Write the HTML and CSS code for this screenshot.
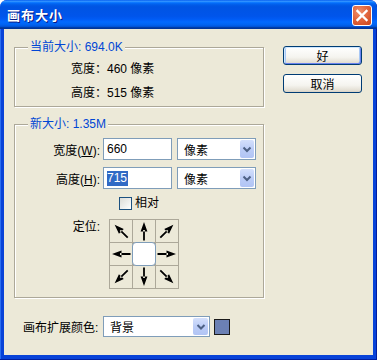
FILE: index.html
```html
<!DOCTYPE html>
<html>
<head>
<meta charset="utf-8">
<link rel="stylesheet" href="styles.css">
</head>
<body>
<div class="window">
  <div class="titlebar">
    <span class="title">画布大小</span>
    <span class="close"><svg width="18" height="19" viewBox="0 0 18 19"><path d="M4.5 5 L13.5 14 M13.5 5 L4.5 14" stroke="#fff" stroke-width="2.4" stroke-linecap="square"/></svg></span>
  </div>
  <div class="client">
    <div class="main">
      <fieldset class="group g1">
        <legend>当前大小: 694.0K</legend>
        <div class="g1-body">
          <div class="info">宽度：460 像素</div>
          <div class="info">高度：515 像素</div>
        </div>
      </fieldset>
      <fieldset class="group g2">
        <legend>新大小: 1.35M</legend>
        <div class="g2-body">
          <div class="frow">
            <span class="flabel">宽度(<u>W</u>):</span>
            <div class="textbox">660</div>
            <div class="combo"><span class="ctext">像素</span><span class="dd"><svg width="14" height="18" viewBox="0 0 14 18"><path d="M3.5 7.5 L7 11 L10.5 7.5" stroke="#4d6185" stroke-width="2" fill="none"/></svg></span></div>
          </div>
          <div class="frow">
            <span class="flabel">高度(<u>H</u>):</span>
            <div class="textbox"><span class="sel">715</span></div>
            <div class="combo"><span class="ctext">像素</span><span class="dd"><svg width="14" height="18" viewBox="0 0 14 18"><path d="M3.5 7.5 L7 11 L10.5 7.5" stroke="#4d6185" stroke-width="2" fill="none"/></svg></span></div>
          </div>
          <div class="check-row">
            <span class="checkbox"></span><span class="check-text">相对</span>
          </div>
          <div class="anchor-row">
            <span class="flabel alabel">定位:</span>
            <div class="anchor">
              <div class="cell"><svg class="arrow a-nw" viewBox="0 0 22 22"><path d="M11 2 L7.6 11.5 L14.4 11.5 Z M10.1 10 H11.9 V20.5 H10.1 Z" fill="#000"/></svg></div>
              <div class="cell"><svg class="arrow a-n" viewBox="0 0 22 22"><path d="M11 2 L7.6 11.5 L14.4 11.5 Z M10.1 10 H11.9 V20.5 H10.1 Z" fill="#000"/></svg></div>
              <div class="cell"><svg class="arrow a-ne" viewBox="0 0 22 22"><path d="M11 2 L7.6 11.5 L14.4 11.5 Z M10.1 10 H11.9 V20.5 H10.1 Z" fill="#000"/></svg></div>
              <div class="cell"><svg class="arrow a-w" viewBox="0 0 22 22"><path d="M11 2 L7.6 11.5 L14.4 11.5 Z M10.1 10 H11.9 V20.5 H10.1 Z" fill="#000"/></svg></div>
              <div class="cell center"></div>
              <div class="cell"><svg class="arrow a-e" viewBox="0 0 22 22"><path d="M11 2 L7.6 11.5 L14.4 11.5 Z M10.1 10 H11.9 V20.5 H10.1 Z" fill="#000"/></svg></div>
              <div class="cell"><svg class="arrow a-sw" viewBox="0 0 22 22"><path d="M11 2 L7.6 11.5 L14.4 11.5 Z M10.1 10 H11.9 V20.5 H10.1 Z" fill="#000"/></svg></div>
              <div class="cell"><svg class="arrow a-s" viewBox="0 0 22 22"><path d="M11 2 L7.6 11.5 L14.4 11.5 Z M10.1 10 H11.9 V20.5 H10.1 Z" fill="#000"/></svg></div>
              <div class="cell"><svg class="arrow a-se" viewBox="0 0 22 22"><path d="M11 2 L7.6 11.5 L14.4 11.5 Z M10.1 10 H11.9 V20.5 H10.1 Z" fill="#000"/></svg></div>
            </div>
          </div>
        </div>
      </fieldset>
      <div class="extend">
        <span class="elabel">画布扩展颜色:</span>
        <div class="combo wide"><span class="ctext">背景</span><span class="dd"><svg width="14" height="17" viewBox="0 0 14 17"><path d="M3.5 7 L7 10.5 L10.5 7" stroke="#4d6185" stroke-width="2" fill="none"/></svg></span></div>
        <span class="swatch"></span>
      </div>
    </div>
    <div class="buttons">
      <div class="btn default">好</div>
      <div class="btn">取消</div>
    </div>
  </div>
</div>
</body>
</html>
```
FILE: styles.css
```css
* { box-sizing: border-box; }
html, body { margin: 0; padding: 0; background: #ffffff; }
body {
  font-family: "Liberation Sans", "Noto Sans CJK SC", sans-serif;
  font-size: 12px;
  color: #000;
}
.window {
  width: 377px;
  height: 360px;
  display: flex;
  flex-direction: column;
  background: #0843d8;
  border-radius: 7px 7px 0 0;
  overflow: hidden;
  box-shadow: inset -1px -1px 0 #001ea0, inset 1px 0 0 #2a6ef0;
}
.titlebar {
  height: 29px;
  flex: none;
  display: flex;
  align-items: center;
  justify-content: space-between;
  padding: 0 5px 0 7px;
  border-radius: 7px 7px 0 0;
  background: linear-gradient(to bottom, #0058ee 0%, #3593ff 4%, #288eff 6%, #127dff 8%, #036ffc 10%, #0262ee 14%, #0057e5 20%, #0054e3 24%, #0055eb 56%, #005bf5 66%, #026afe 76%, #0062ef 86%, #0052d6 92%, #0040ab 94%, #003092 100%);
}
.title {
  color: #fff;
  font-family: "Noto Sans CJK SC", sans-serif;
  font-weight: bold;
  font-size: 13px;
  letter-spacing: 1px;
  line-height: 16px;
  margin-top: 1px;
  text-shadow: 1px 1px 0 #0a1883;
}
.close {
  width: 20px;
  height: 21px;
  margin-top: 2px;
  border: 1px solid #fff;
  border-radius: 3px;
  background: radial-gradient(circle at 35% 30%, #f0906c 0%, #e2673f 45%, #c9441c 100%);
  display: flex;
  align-items: center;
  justify-content: center;
}
.close svg { display: block; }
.client {
  flex: 1;
  margin: 0 4px 5px 4px;
  background: #ece9d8;
  display: flex;
}
.main {
  margin-left: 10px;
  width: 250px;
  padding-top: 11px;
  display: flex;
  flex-direction: column;
}
.group {
  margin: 0;
  padding: 0;
  min-width: 0;
  border: 1px solid #aca899;
  box-shadow: inset 1px 1px 0 #fff, 1px 1px 0 #fff;
}
.group legend {
  margin-left: 13px;
  padding: 0 2px;
  color: #0046d5;
  line-height: 14px;
  background: #ece9d8;
}
.g1-body { padding: 3px 0 1px 56px; }
.info { height: 24px; line-height: 24px; }
.g2 { margin-top: 10px; }
.g2-body { padding: 7px 0 8px 0; }
.frow { display: flex; height: 22px; align-items: center; }
.frow + .frow { margin-top: 7px; }
.flabel { width: 85px; text-align: right; flex: none; }
.textbox {
  margin-left: 3px;
  width: 69px;
  height: 22px;
  border: 1px solid #7f9db9;
  background: #fff;
  padding-left: 3px;
  line-height: 20px;
  display: flex;
  align-items: center;
}
.sel {
  background: #316ac5;
  color: #fff;
  line-height: 15px;
  padding: 0 1px 0 0;
}
.combo {
  margin-left: 5px;
  width: 79px;
  height: 22px;
  border: 1px solid #7f9db9;
  background: #fff;
  padding: 1px;
  display: flex;
  align-items: stretch;
}
.ctext {
  flex: 1;
  padding-left: 5px;
  display: flex;
  align-items: center;
}
.dd {
  width: 14px;
  border-radius: 2px;
  background: linear-gradient(180deg, #d4e0fc 0%, #bccdf7 50%, #b1c4f4 100%);
  display: flex;
  align-items: center;
  justify-content: center;
}
.dd svg { display: block; }
.check-row {
  margin-top: 8px;
  height: 13px;
  display: flex;
  align-items: center;
  padding-left: 104px;
}
.checkbox {
  width: 13px;
  height: 13px;
  border: 1px solid #1c5180;
  background: linear-gradient(135deg, #dcdcd7 0%, #ffffff 100%);
}
.check-text { margin-left: 3px; line-height: 13px; }
.anchor-row { margin-top: 9px; display: flex; align-items: flex-start; }
.alabel { line-height: 16px; }
.anchor {
  margin-left: 9px;
  display: grid;
  grid-template-columns: repeat(3, 22px);
  grid-template-rows: repeat(3, 22px);
  gap: 1px;
  background: #aca899;
  border: 1px solid #aca899;
}
.cell { background: #ece9d8; display: flex; align-items: center; justify-content: center; }
.cell.center {
  margin: -1px;
  background: #fff;
  border: 1px solid #7f9db9;
  border-radius: 4px;
  z-index: 1;
}
.arrow { width: 22px; height: 22px; display: block; }
.a-n { transform: rotate(0deg); }
.a-ne { transform: rotate(45deg); }
.a-e { transform: rotate(90deg); }
.a-se { transform: rotate(135deg); }
.a-s { transform: rotate(180deg); }
.a-sw { transform: rotate(225deg); }
.a-w { transform: rotate(270deg); }
.a-nw { transform: rotate(315deg); }
.extend {
  margin-top: 18px;
  padding-left: 9px;
  display: flex;
  align-items: center;
  height: 21px;
}
.elabel { width: 80px; flex: none; }
.combo.wide { margin-left: 0; width: 107px; height: 21px; }
.combo.wide .dd { width: 15px; }
.swatch {
  margin-left: 4px;
  width: 16px;
  height: 16px;
  border: 1px solid #1a1a1a;
  background: #6b80b4;
}
.buttons {
  margin-left: 19px;
  padding-top: 17px;
  display: flex;
  flex-direction: column;
  gap: 9px;
}
.btn {
  width: 79px;
  height: 19px;
  border: 1px solid #003c74;
  border-radius: 3px;
  background: linear-gradient(180deg, #ffffff 0%, #f5f4ef 60%, #e3dfd4 90%, #d6d0c5 100%);
  display: flex;
  align-items: center;
  justify-content: center;
  font-family: "Noto Sans CJK SC", sans-serif;
  line-height: 1;
}
.btn.default {
  box-shadow: inset 1px 1px 0 #cee7ff, inset -1px -1px 0 #6982ee, inset 2px 0 0 #a9c8f5, inset -2px 0 0 #a9c8f5;
}
```
